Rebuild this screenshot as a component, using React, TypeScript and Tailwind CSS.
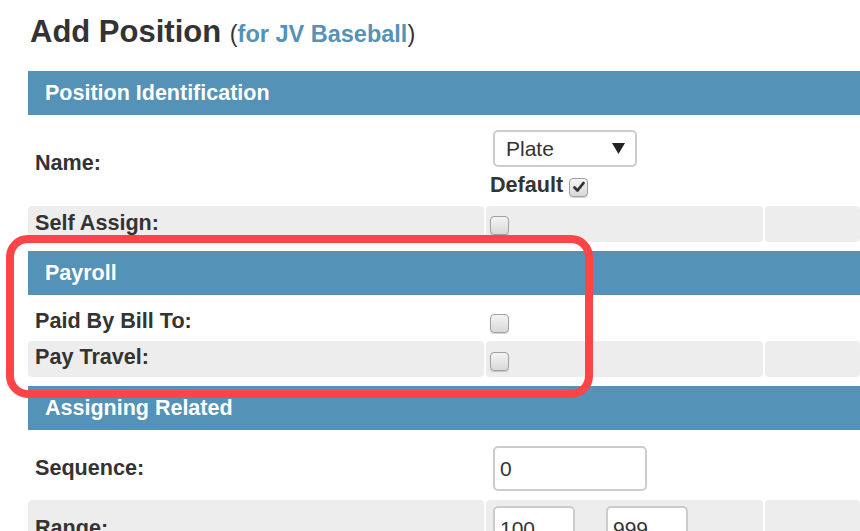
import React from "react";

function SectionHeader({ title }: { title: string }) {
  return (
    <div className="h-[44px] bg-[#5592b8] flex items-center pl-[17px] text-white font-bold text-[21.5px] leading-[24px]">
      {title}
    </div>
  );
}

function Checkbox({ checked = false }: { checked?: boolean }) {
  return (
    <span className="flex items-center justify-center w-[19px] h-[19px] rounded-[4px] border border-[#a0a0a0] bg-linear-to-b from-[#f4f4f4] to-[#d8d8d8] shadow-[0_1px_1px_rgba(0,0,0,0.18)]">
      {checked && (
        <svg width="14" height="14" viewBox="0 0 14 14">
          <path d="M2.5 7.5 L5.5 10.5 L11.5 3" fill="none" stroke="#333" strokeWidth="2.8" strokeLinecap="round" strokeLinejoin="round" />
        </svg>
      )}
    </span>
  );
}

interface RowProps {
  label: string;
  height: string;
  gray?: boolean;
  labelPad: string;
  children?: React.ReactNode;
}

function Row({ label, height, gray, labelPad, children }: RowProps) {
  const cell = gray ? "bg-[#ededed] rounded-[4px]" : "";
  return (
    <div className={`grid grid-cols-[456px_277px_1fr] gap-x-[2px] ${height}`}>
      <div className={`${cell} pl-[7px] ${labelPad} font-bold text-[21.6px] leading-[24px]`}>{label}</div>
      <div className={`${cell} pl-[4px]`}>{children}</div>
      <div className={cell} />
    </div>
  );
}

export default function App() {
  return (
    <div className="relative h-[531px] w-[860px] overflow-hidden bg-white text-[#333] font-['Liberation_Sans',Arial,sans-serif]">
      <h1 className="h-[31px] mt-[16px] pl-[30px] text-[31px] leading-[31px] font-bold whitespace-nowrap">
        Add Position{" "}
        <span className="text-[23.5px] leading-none font-normal">
          (<span className="font-bold text-[#5592b8]">for JV Baseball</span>)
        </span>
      </h1>

      <div className="ml-[28px] mt-[24px]">
        <SectionHeader title="Position Identification" />
        <Row label="Name:" height="h-[91px]" labelPad="pt-[36px]">
          <div className="pt-[15px] pl-[3px]">
            <div className="w-[144px] h-[37px] border-2 border-[#cccccc] rounded-[5px] flex items-center justify-between pl-[11px] pr-[10px] text-[21px]">
              <span>Plate</span>
              <svg width="13" height="11" viewBox="0 0 13 11">
                <path d="M0 0 H13 L6.5 11 Z" fill="#222" />
              </svg>
            </div>
          </div>
          <div className="mt-[6px] flex items-center gap-[6px] font-bold text-[21.6px] leading-[24px]">
            <span>Default</span>
            <span className="mt-[4px]">
              <Checkbox checked />
            </span>
          </div>
        </Row>
        <Row label="Self Assign:" height="h-[36px]" gray labelPad="pt-[5px]">
          <div className="pt-[10px] flex">
            <Checkbox />
          </div>
        </Row>

        <div className="mt-[9px]">
          <SectionHeader title="Payroll" />
        </div>
        <Row label="Paid By Bill To:" height="h-[46px]" labelPad="pt-[14px]">
          <div className="pt-[19px] flex">
            <Checkbox />
          </div>
        </Row>
        <Row label="Pay Travel:" height="h-[36px]" gray labelPad="pt-[4px]">
          <div className="pt-[11px] flex">
            <Checkbox />
          </div>
        </Row>

        <div className="mt-[9px]">
          <SectionHeader title="Assigning Related" />
        </div>
        <Row label="Sequence:" height="h-[70px]" labelPad="pt-[26px]">
          <div className="pt-[16px] pl-[3px]">
            <input
              readOnly
              value="0"
              className="w-[154px] h-[45px] border-2 border-[#cccccc] rounded-[5px] pl-[5px] text-[21px] text-[#333] outline-none"
            />
          </div>
        </Row>
        <Row label="Range:" height="h-[60px]" gray labelPad="pt-[16px]">
          <div className="pt-[6px] pl-[3px] flex items-start gap-[12px]">
            <input
              readOnly
              value="100"
              className="w-[82px] h-[45px] border-2 border-[#cccccc] rounded-[5px] pl-[5px] text-[21px] text-[#333] bg-white outline-none"
            />
            <span className="pt-[10px] text-[21px]">-</span>
            <input
              readOnly
              value="999"
              className="w-[82px] h-[45px] border-2 border-[#cccccc] rounded-[5px] pl-[5px] text-[21px] text-[#333] bg-white outline-none"
            />
          </div>
        </Row>
      </div>

      {/* annotation highlight */}
      <div className="absolute left-[6px] top-[235px] w-[587px] h-[163px] border-[8px] border-[#ff4447] rounded-[22px] pointer-events-none" />
    </div>
  );
}
